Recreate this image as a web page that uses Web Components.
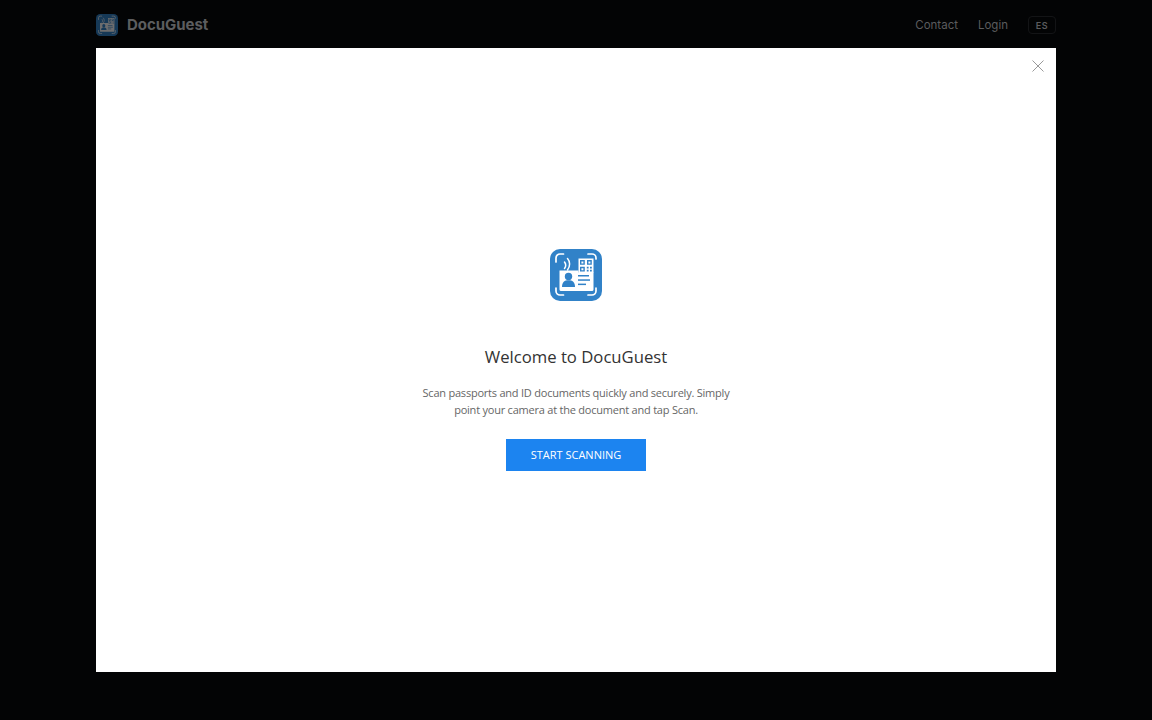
<!DOCTYPE html>
<html lang="en">
<head>
<meta charset="utf-8">
<title>DocuGuest</title>
<style>
    html, body { margin: 0; height: 100%; background: #030405; }
    body { display: flex; flex-direction: column; align-items: center; overflow: hidden; }
</style>
</head>
<body>
<dg-header></dg-header>
<dg-dialog>
    <dg-logo slot="logo" size="52"></dg-logo>
    <span slot="title">Welcome to DocuGuest</span>
    Scan passports and ID documents quickly and securely. Simply<br>point your camera at the document and tap Scan.
    <span slot="action">START SCANNING</span>
</dg-dialog>
<script>
class DgLogo extends HTMLElement {
    constructor () {
        super();
        const size = this.getAttribute('size') || 52;
        const shadow = this.attachShadow({ mode: 'open' });
        shadow.innerHTML = `
        <style>
            :host { display: block; width: ${size}px; height: ${size}px; }
            svg { display: block; width: 100%; height: 100%; }
        </style>
        <svg viewBox="0 0 52 52" aria-hidden="true">
            <rect width="52" height="52" rx="10" fill="#3182c8"/>
            <g fill="none" stroke="#fff" stroke-width="1.700" stroke-linecap="round">
                <path d="M6 13V9a4 4 0 0 1 4-4h3.500"/>
                <path d="M6 39v3a4 4 0 0 0 4 4h3.500"/>
                <path d="M38 46h4a4 4 0 0 0 4-4v-3"/>
                <path d="M38 5h4a4 4 0 0 1 4 4v1"/>
                <path d="M14.500 19.500c1.500-2 1.500-4.500 0-6.500" stroke-width="1.500"/>
                <path d="M17.500 21c2.800-3.500 2.800-8.500 0-11.500" stroke-width="1.500"/>
            </g>
            <path d="M9.500 21.500h19v2h15v17a1.500 1.500 0 0 1-1.500 1.500H11a1.500 1.500 0 0 1-1.500-1.500z" fill="#fff"/>
            <rect x="28.500" y="9.500" width="15" height="14.500" fill="#fff"/>
            <g fill="#3182c8">
                <path d="M30 11h4.800v4.800H30zM37 11h4.800v4.800H37zM30 17.800h4.800v4.800H30z"/>
                <path d="M36.800 17.800h1.800v1.800h-1.800zM40 17.800h1.800v1.800H40zM36.800 20.800h1.800v1.800h-1.800zM40 20.800h1.800v1.800H40z"/>
            </g>
            <path d="M31.400 12.400h2v2h-2zM38.400 12.400h2v2h-2zM31.400 19.200h2v2h-2z" fill="#fff"/>
            <circle cx="18.500" cy="27.500" r="3.700" fill="#3182c8"/>
            <path d="M12 38c0-5 2.500-6.800 6.500-6.800S25 33 25 38z" fill="#3182c8"/>
            <g fill="#3182c8">
                <rect x="28" y="26" width="11" height="1.500"/>
                <rect x="28" y="30.300" width="12" height="1.500"/>
                <rect x="28" y="34.600" width="8" height="1.500"/>
            </g>
        </svg>`;
    }
}

class DgHeader extends HTMLElement {
    constructor () {
        super();
        const shadow = this.attachShadow({ mode: 'open' });
        shadow.innerHTML = `
        <style>
            :host {
                display: flex;
                align-items: center;
                flex: none;
                box-sizing: border-box;
                width: 960px;
                height: 48px;
                padding-top: 2px;
                font-family: Inter, "Open Sans", sans-serif;
                color: #5b5c5e;
            }
            .brand { display: flex; align-items: center; gap: 9px; font-size: 15px; font-weight: 700; letter-spacing: -.05px; color: #5c5d5f; }
            .brand dg-logo { opacity: .42; }
            .brand span { margin-bottom: 2px; }
            nav { margin-left: auto; display: flex; align-items: center; font-size: 11.500px; }
            nav a { margin-right: 20px; }
            .lang {
                box-sizing: border-box;
                width: 28px;
                height: 18px;
                display: flex;
                align-items: center;
                justify-content: center;
                border: 1px solid #131416;
                border-radius: 4px;
                font-size: 9px;
                font-weight: 600;
                letter-spacing: .5px;
            }
        </style>
        <div class="brand"><dg-logo size="22"></dg-logo><span>DocuGuest</span></div>
        <nav><a>Contact</a><a>Login</a><span class="lang">ES</span></nav>`;
    }
}

class DgDialog extends HTMLElement {
    constructor () {
        super();
        const shadow = this.attachShadow({ mode: 'open' });
        shadow.innerHTML = `
        <style>
            :host {
                display: flex;
                flex-direction: column;
                align-items: center;
                flex: none;
                position: relative;
                box-sizing: border-box;
                width: 960px;
                height: 624px;
                padding-top: 201px;
                background: #fff;
                font-family: "Open Sans", "Noto Sans", sans-serif;
                text-align: center;
            }
            .close { position: absolute; top: 11.500px; right: 12px; width: 12px; height: 12px; }
            h2 { margin: 44px 0 0; font-size: 16.700px; line-height: 24px; font-weight: 400; color: #333; }
            p { margin: 15px 0 0; font-size: 11px; line-height: 17px; letter-spacing: -.22px; color: #666; }
            button {
                box-sizing: border-box;
                margin-top: 21px;
                width: 140px;
                height: 32px;
                padding: 0 0 2px;
                border: 0;
                background: #1c84f0;
                color: #fff;
                font: 11px "Open Sans", "Noto Sans", sans-serif;
            }
        </style>
        <svg class="close" viewBox="0 0 12 12" aria-hidden="true"><path d="M.5 .5l11 11M11.500 .5l-11 11" stroke="#999" stroke-width="1" fill="none"/></svg>
        <slot name="logo"></slot>
        <h2><slot name="title"></slot></h2>
        <p><slot></slot></p>
        <button type="button"><slot name="action"></slot></button>`;
    }
}

customElements.define('dg-logo', DgLogo);
customElements.define('dg-header', DgHeader);
customElements.define('dg-dialog', DgDialog);
</script>
</body>
</html>
